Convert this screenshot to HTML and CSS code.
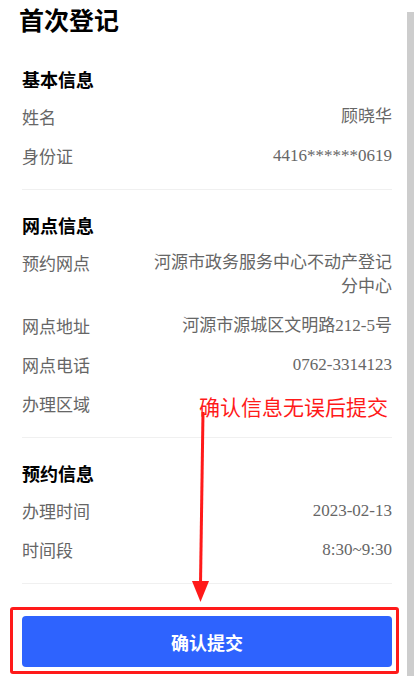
FILE: index.html
```html
<!DOCTYPE html>
<html lang="zh-CN">
<head>
  <meta charset="UTF-8" />
  <meta name="viewport" content="width=device-width, initial-scale=1.0"/>
  <title>首次登记</title>
  <link rel="stylesheet" href="styles.css">
</head>
<body>
  <div class="page">
    <h1 class="title">首次登记</h1>

    <div class="section">
      <h2>基本信息</h2>
      <div class="row"><span class="label">姓名</span><span class="value">顾晓华</span></div>
      <div class="row"><span class="label">身份证</span><span class="value">4416******0619</span></div>
    </div>

    <div class="section">
      <h2>网点信息</h2>
      <div class="row"><span class="label">预约网点</span><span class="value">河源市政务服务中心不动产登记分中心</span></div>
      <div class="row"><span class="label">网点地址</span><span class="value">河源市源城区文明路212-5号</span></div>
      <div class="row"><span class="label">网点电话</span><span class="value">0762-3314123</span></div>
      <div class="row"><span class="label">办理区域</span><span class="value"></span></div>
    </div>

    <div class="section">
      <h2>预约信息</h2>
      <div class="row"><span class="label">办理时间</span><span class="value">2023-02-13</span></div>
      <div class="row"><span class="label">时间段</span><span class="value">8:30~9:30</span></div>
    </div>

    <div class="actions">
      <button class="btn">确认提交</button>
    </div>
  </div>

  <!-- annotation overlay -->
  <div class="mark-text">确认信息无误后提交</div>
  <svg class="mark-arrow" width="414" height="676" viewBox="0 0 414 676">
    <line x1="203" y1="412" x2="200.5" y2="584" stroke="#ff1a1a" stroke-width="3"/>
    <polygon points="192,581 209,581 200.5,602" fill="#ff1a1a"/>
  </svg>
  <div class="mark-frame"></div>

  <div class="scroll-bar"></div>
</body>
</html>
```

FILE: styles.css
```css
html, body {
  margin: 0;
  padding: 0;
  height: 676px;
  overflow: hidden;
  background: #fff;
}

body {
  font-family: "Liberation Serif", "Noto Sans CJK SC", serif;
  position: relative;
}

.page {
  padding: 0 22px;
}

.title {
  margin: 3px 0 0 -3px;
  font-family: "Noto Sans CJK SC", sans-serif;
  font-size: 25px;
  line-height: 32px;
  font-weight: bold;
  color: #000;
}

.section {
  padding: 23px 0 13px;
  border-bottom: 1px solid #f0f0f0;
}

.title + .section {
  padding-top: 32px;
}

.section h2 {
  margin: 0 0 7px;
  font-family: "Noto Sans CJK SC", sans-serif;
  font-size: 18px;
  line-height: 24px;
  font-weight: bold;
  color: #000;
}

.row {
  display: flex;
  justify-content: space-between;
  gap: 16px;
  padding: 7px 0 8px;
  font-size: 17px;
  line-height: 24px;
  color: #666;
}

.label {
  flex-shrink: 0;
  font-family: "Noto Sans CJK SC", sans-serif;
}

.value {
  text-align: right;
  max-width: 240px;
}

.actions {
  padding-top: 32px;
}

.btn {
  display: block;
  width: 100%;
  height: 51px;
  border: none;
  border-radius: 4px;
  background: #2e63fe;
  color: #fff;
  font-family: "Noto Sans CJK SC", sans-serif;
  font-size: 18px;
  font-weight: bold;
  cursor: pointer;
}

.mark-text {
  position: absolute;
  left: 199px;
  top: 392px;
  font-family: "Noto Sans CJK SC", sans-serif;
  font-size: 21px;
  line-height: 28px;
  color: #ff1a1a;
}

.mark-arrow {
  position: absolute;
  left: 0;
  top: 0;
}

.mark-frame {
  position: absolute;
  left: 10px;
  top: 607px;
  width: 383px;
  height: 61px;
  border: 3px solid #ff1a1a;
  border-radius: 3px;
}

.scroll-bar {
  position: absolute;
  right: 0;
  top: 12px;
  bottom: 0;
  width: 7px;
  background: #cdcdcd;
}
```
